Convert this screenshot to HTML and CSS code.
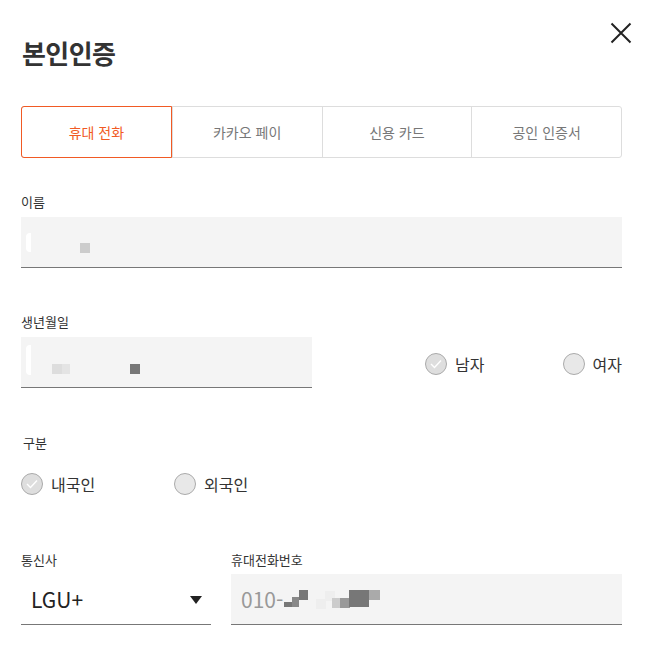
FILE: index.html
```html
<!DOCTYPE html>
<html lang="ko">
<head>
<meta charset="utf-8">
<link rel="stylesheet" href="styles.css">
</head>
<body>
<div class="modal">
  <header class="head">
    <h1 class="title">본인인증</h1>
    <button class="close" aria-label="닫기">
      <svg width="22" height="22" viewBox="0 0 22 22"><path d="M1.5 1.5 L20.5 20.5 M20.5 1.5 L1.5 20.5" stroke="#222" stroke-width="2" fill="none"/></svg>
    </button>
  </header>

  <nav class="tabs">
    <div class="tab active">휴대 전화</div>
    <div class="tab">카카오 페이</div>
    <div class="tab">신용 카드</div>
    <div class="tab">공인 인증서</div>
  </nav>

  <section class="field f-name">
    <div class="label">이름</div>
    <div class="input">
      <span class="cursor"></span>
      <span class="px px-a"></span>
    </div>
  </section>

  <section class="field f-birth">
    <div class="label">생년월일</div>
    <div class="row">
      <div class="input short">
        <span class="cursor tall"></span>
        <span class="px px-b1"></span><span class="px px-b2"></span>
        <span class="px px-b3"></span>
      </div>
      <div class="gender">
        <label class="radio checked"><span class="dot"><svg width="12" height="10" viewBox="0 0 12 10"><path d="M1 5 L4.5 8.5 L11 1.5" stroke="#fff" stroke-width="1.4" fill="none"/></svg></span>남자</label>
        <label class="radio"><span class="dot"></span>여자</label>
      </div>
    </div>
  </section>

  <section class="field f-kind">
    <div class="label lbl-kind">구분</div>
    <div class="kinds">
      <label class="radio checked w-local"><span class="dot"><svg width="12" height="10" viewBox="0 0 12 10"><path d="M1 5 L4.5 8.5 L11 1.5" stroke="#fff" stroke-width="1.4" fill="none"/></svg></span>내국인</label>
      <label class="radio"><span class="dot"></span>외국인</label>
    </div>
  </section>

  <section class="field f-phone">
    <div class="col carrier">
      <div class="label">통신사</div>
      <div class="select">LGU+<span class="caret"></span></div>
    </div>
    <div class="col number">
      <div class="label">휴대전화번호</div>
      <div class="input phone">
        <span class="val">010-</span>
        <span class="mask">
          <span class="m m1"></span><span class="m m2"></span><span class="m m3"></span><span class="m m4"></span><span class="m m5"></span><span class="m m6"></span><span class="m m7"></span><span class="m m8"></span><span class="m m9"></span>
        </span>
      </div>
    </div>
  </section>
</div>
</body>
</html>
```

FILE: styles.css
```css
* { box-sizing: border-box; }
html, body { margin: 0; padding: 0; background: #fff; }
body {
  font-family: "Noto Sans CJK KR", "Noto Sans", sans-serif;
  color: #333;
}
.modal {
  width: 651px;
  padding: 0 29px 0 21px;
}
.head {
  position: relative;
  height: 106px;
}
.title {
  margin: 0;
  padding-top: 34px;
  padding-left: 1px;
  font-size: 26px;
  line-height: 38px;
  font-weight: 700;
  color: #333;
  letter-spacing: -0.6px;
}
.close {
  position: absolute;
  right: -10px;
  top: 22px;
  width: 22px;
  height: 22px;
  padding: 0;
  border: 0;
  background: none;
}
.close svg { display: block; }

.tabs {
  display: grid;
  grid-template-columns: repeat(4, 1fr);
  height: 52px;
  border: 1px solid #ddd;
  border-radius: 3px;
}
.tab {
  display: flex;
  align-items: center;
  justify-content: center;
  font-size: 14px;
  color: #777;
  border-left: 1px solid #ddd;
}
.tab:first-child { border-left: 0; }
.tab.active {
  margin: -1px 0 -1px -1px;
  border: 1px solid #f15a24;
  border-radius: 3px 0 0 3px;
  color: #f15a24;
}

.label {
  font-size: 13px;
  line-height: 20px;
  color: #333;
}
.input {
  position: relative;
  height: 51px;
  background: #f4f4f4;
  border-bottom: 1px solid #777;
}
.f-name { margin-top: 34px; }
.f-name .label { margin-bottom: 5px; }
.f-birth { margin-top: 44px; }
.f-birth .label { margin-bottom: 5px; }
.row { display: flex; align-items: center; }
.input.short { width: 291px; }
.gender {
  flex: 1;
  display: flex;
  justify-content: space-between;
  padding-left: 113px;
  padding-top: 2px;
}
.radio {
  display: flex;
  align-items: center;
  gap: 8px;
  font-size: 16px;
  line-height: 22px;
  color: #333;
}
.dot {
  width: 22px;
  height: 22px;
  border-radius: 50%;
  border: 1px solid #aaa;
  background: #e8e8e8;
  display: flex;
  align-items: center;
  justify-content: center;
}
.radio.checked .dot { background: #dedede; }
.f-kind { margin-top: 45px; }
.lbl-kind { padding-left: 2px; margin-bottom: 20px; }
.kinds { display: flex; }
.w-local { width: 153px; }

.f-phone {
  margin-top: 55px;
  display: flex;
  gap: 20px;
}
.col.carrier { width: 190px; }
.col.number { flex: 1; }
.f-phone .label { margin-bottom: 4px; }
.select {
  position: relative;
  height: 51px;
  border-bottom: 1px solid #777;
  font-size: 21px;
  line-height: 50px;
  padding-left: 10px;
  color: #222;
}
.caret {
  position: absolute;
  right: 9px;
  top: 22px;
  width: 0;
  height: 0;
  border-left: 6px solid transparent;
  border-right: 6px solid transparent;
  border-top: 8px solid #222;
}
.input.phone {
  display: flex;
  align-items: center;
  padding-left: 10px;
}
.val {
  font-size: 21px;
  color: #999;
  line-height: 50px;
}

/* masked (pixelated) values */
.cursor {
  position: absolute;
  left: 5px;
  top: 16px;
  width: 5px;
  height: 19px;
  background: #fff;
  border-radius: 4px 0 0 4px;
}
.cursor.tall { top: 8px; height: 30px; }
.px { position: absolute; width: 10px; height: 10px; }
.px-a { left: 59px; top: 26px; background: #ccc; }
.px-b1 { left: 31px; top: 27px; background: #ddd; width: 10px; }
.px-b2 { left: 41px; top: 27px; background: #e4e4e4; width: 8px; }
.px-b3 { left: 109px; top: 27px; background: #777; width: 10px; }
.mask { position: relative; width: 110px; height: 30px; margin-left: 1px; }
.m { position: absolute; width: 10px; height: 10px; }
.m1 { left: 0; top: 18px; width: 8px; height: 5px; background: #777; }
.m2 { left: 8px; top: 13px; background: #888; width: 7px; height: 10px; }
.m3 { left: 15px; top: 6px; background: #777; width: 9px; height: 10px; }
.m4 { left: 32px; top: 15px; background: #eee; }
.m5 { left: 41px; top: 7px; background: #eee; }
.m6 { left: 48px; top: 14px; background: #ccc; }
.m7 { left: 56px; top: 14px; background: #999; }
.m8 { left: 65px; top: 6px; background: #777; width: 20px; height: 17px; }
.m9 { left: 85px; top: 6px; background: #aaa; width: 11px; }
```
